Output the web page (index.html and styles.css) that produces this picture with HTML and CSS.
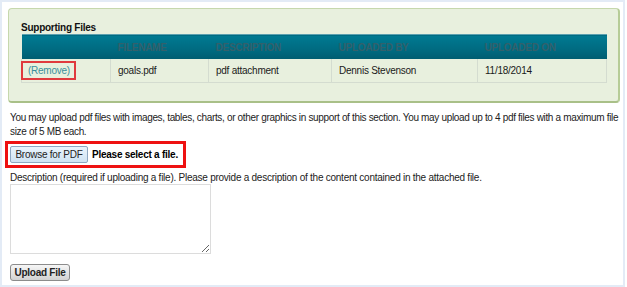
FILE: index.html
```html
<!DOCTYPE html>
<html lang="en">
<head>
    <meta charset="UTF-8">
    <title>Supporting Files</title>
    <link rel="stylesheet" href="styles.css">
</head>
<body>
<div class="frame">

    <div class="files_panel">
        <div class="files_title">Supporting Files</div>
        <table class="files_table">
            <tr class="head_row">
                <th class="col_action"></th>
                <th class="col_name">Filename</th>
                <th class="col_desc">Description</th>
                <th class="col_by">Uploaded By</th>
                <th class="col_on">Uploaded On</th>
            </tr>
            <tr>
                <td class="col_action"><a class="remove_link" href="#">(Remove)</a></td>
                <td>goals.pdf</td>
                <td>pdf attachment</td>
                <td>Dennis Stevenson</td>
                <td>11/18/2014</td>
            </tr>
        </table>
    </div>

    <p class="info">You may upload pdf files with images, tables, charts, or other graphics in support of this section. You may upload up to 4 pdf files with a maximum file<br>size of 5 MB each.</p>

    <div class="browse_row">
        <button class="browse_button">Browse for PDF</button>
        <span class="file_status">Please select a file.</span>
    </div>

    <label class="desc_label" for="desc_input">Description (required if uploading a file). Please provide a description of the content contained in the attached file.</label>
    <textarea id="desc_input" class="desc_input"></textarea>

    <div class="upload_row">
        <button class="upload_button">Upload File</button>
    </div>

</div>
</body>
</html>
```

FILE: styles.css
```css
html, body {
    margin: 0;
    padding: 0;
    background-color: #ffffff;
}

body {
    font-family: "Liberation Sans", Arial, Helvetica, sans-serif;
    font-size: 10px;
    letter-spacing: -0.25px;
    color: #222;
}

.frame {
    box-sizing: border-box;
    width: 625px;
    height: 287px;
    border: 2px solid #e3ebf6;
    padding: 6px 0 0 6px;
}

.files_panel {
    box-sizing: border-box;
    width: 612px;
    height: 95px;
    background-color: #e8f0de;
    border: 1px solid #c6d8ad;
    border-right: 2px solid #b6cc97;
    border-bottom: 2px solid #a9c088;
    border-radius: 4px;
    padding: 13px 0 0 12px;
}

.files_title {
    font-weight: bold;
    font-size: 10px;
    color: #111;
    line-height: 12px;
}

.files_table {
    border-collapse: collapse;
    width: 586px;
    font-size: 10px;
}

.files_table th {
    height: 24px;
    padding: 0 7px;
    text-align: left;
    font-size: 10px;
    font-weight: bold;
    text-transform: uppercase;
    color: #33606b;
    background-image: linear-gradient(#007a92, #006a80 60%, #005c70);
    border-top: 1px solid #5aa0b0;
}

.files_table td {
    height: 23px;
    padding: 0 7px;
    color: #1a1a1a;
    border: 1px solid #d4dcd0;
    border-top: none;
}

.col_action { width: 74px; }
.col_name { width: 84px; }
.col_desc { width: 109px; }
.col_by { width: 132px; }

.remove_link {
    display: inline-block;
    color: #3a8f9c;
    line-height: 11px;
    text-decoration: none;
    border: 2px solid #e03a3e;
    padding: 2px 4px 2px 5px;
    margin-left: -8px;
}

.info {
    margin: 8px 0 0 2px;
    line-height: 14px;
    letter-spacing: -0.33px;
    white-space: nowrap;
    color: #222;
}

.browse_row {
    display: flex;
    align-items: center;
    gap: 4px;
    width: 173px;
    height: 21px;
    margin: 2px 0 0 -3px;
    border: 3px solid #ee1111;
    padding: 0 0 0 2px;
    white-space: nowrap;
}

.browse_button {
    font-family: inherit;
    font-size: 10px;
    letter-spacing: -0.25px;
    line-height: 14px;
    color: #222;
    width: 78px;
    height: 17px;
    padding: 0;
    white-space: nowrap;
    border: 1px solid #8ea8c2;
    border-radius: 2px;
    background-image: linear-gradient(#eaf4fc, #cfe3f3);
}

.file_status {
    font-weight: bold;
    font-size: 10px;
    color: #000;
}

.desc_label {
    display: block;
    margin: 4px 0 0 2px;
    line-height: 12px;
}

.desc_input {
    display: block;
    box-sizing: border-box;
    width: 201px;
    height: 70px;
    margin: 0 0 0 2px;
    border: 1px solid #dcdcdc;
    resize: both;
}

.upload_row {
    margin: 10px 0 0 2px;
}

.upload_button {
    display: block;
    font-family: inherit;
    font-size: 10px;
    letter-spacing: -0.25px;
    font-weight: bold;
    line-height: 14px;
    color: #222;
    width: 60px;
    height: 17px;
    padding: 0;
    white-space: nowrap;
    border: 1px solid #8c8c8c;
    border-radius: 3px;
    background-image: linear-gradient(#f6f6f6, #d2d2d2);
}
```
